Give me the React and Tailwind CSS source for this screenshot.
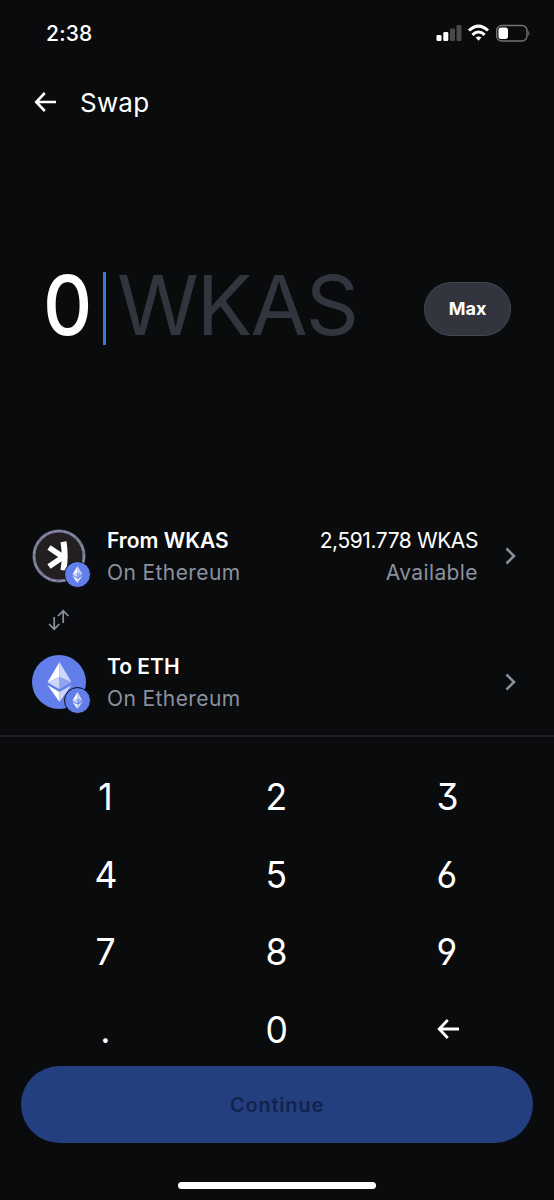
const KEYS = ['1', '2', '3', '4', '5', '6', '7', '8', '9', '.', '0', 'back']

function BackArrow({ size = 24, strokeWidth = 2.6 }) {
  return (
    <svg width={size} height={size} viewBox="0 0 24 24" fill="none" stroke="currentColor" strokeWidth={strokeWidth}>
      <path d="M11.8 3 L3.2 12 L11.8 21 M3.2 12 H23" />
    </svg>
  )
}

function EthDiamond({ className }) {
  return (
    <svg className={className} viewBox="0 0 24 40">
      <path d="M12 0 L0 20.3 L12 15z" fill="#fff" />
      <path d="M12 0 L24 20.3 L12 15z" fill="#ced7fa" />
      <path d="M12 15 L0 20.3 L12 27.3z" fill="#ced7fa" />
      <path d="M12 15 L24 20.3 L12 27.3z" fill="#91a5f3" />
      <path d="M0 23 L12 30 V40z" fill="#fff" />
      <path d="M24 23 L12 30 V40z" fill="#ced7fa" />
    </svg>
  )
}

function NetworkBadge() {
  return (
    <div className="absolute top-[32px] left-[32px] flex size-[27px] items-center justify-center rounded-full border-[1.5px] border-[#0a0b0d] bg-[#627eea]">
      <EthDiamond className="h-[17px] w-[11px]" />
    </div>
  )
}

function KaspaLogo() {
  return (
    <svg className="size-[54px]" viewBox="0 0 54 54" fill="none">
      <circle cx="27" cy="27" r="25" fill="#231f20" stroke="#70738f" strokeWidth="3" />
      <circle cx="27" cy="27" r="25" stroke="#9a9cb2" strokeWidth="1" strokeDasharray="7 3 4 2" />
      <path d="M31.5 12.8 Q33.8 27 31.5 41.4" stroke="#fff" strokeWidth="6" />
      <path d="M17 18.5 L31 28 L17 37.5" stroke="#fff" strokeWidth="5.6" />
    </svg>
  )
}

function EthLogo() {
  return (
    <div className="flex size-[54px] items-center justify-center rounded-full bg-[#627eea]">
      <EthDiamond className="h-10 w-[25px]" />
    </div>
  )
}

function AssetRow({ logo, title, network, balance }) {
  return (
    <div className="flex h-16 items-center pr-[37px] pl-8">
      <div className="relative">
        {logo}
        <NetworkBadge />
      </div>
      <div className="ml-[21px] flex-1 pt-0.5 text-[21px] leading-8">
        <p className="font-semibold text-white">{title}</p>
        <p className="tracking-[0.4px] text-[#8a919e]">{network}</p>
      </div>
      {balance && (
        <div className="mr-[26px] pt-0.5 text-right text-[21px] leading-8">
          <p className="tracking-[-0.42px] text-white">{balance}</p>
          <p className="tracking-[0.4px] text-[#8a919e]">Available</p>
        </div>
      )}
      <svg className="h-[18px] w-[13px] text-[#8a919e]" viewBox="0 0 13 18" fill="none" stroke="currentColor" strokeWidth="2.6">
        <path d="M2.5 1.5 L10 9 L2.5 16.5" />
      </svg>
    </div>
  )
}

function StatusBar() {
  return (
    <div className="flex h-[66px] items-center justify-between pr-[24px] pl-[46px]">
      <span className="pt-0.5 text-[21px] font-medium tracking-[0.2px]">2:38</span>
      <svg className="h-[18px] w-[94px]" viewBox="0 0 94 18">
        <rect x="0.5" y="11" width="5" height="6" rx="1.3" fill="#fff" />
        <rect x="7.3" y="8" width="5" height="9" rx="1.3" fill="#fff" />
        <rect x="14" y="4.5" width="5" height="12.5" rx="1.3" fill="#48494b" />
        <rect x="20.5" y="1" width="5" height="16" rx="1.3" fill="#48494b" />
        <g fill="none" stroke="#fff" strokeWidth="3">
          <path d="M33 6.5 Q42.5 -2.3 52 6.5" />
          <path d="M36.4 10.8 Q42.5 5.3 48.6 10.8" />
        </g>
        <path d="M39.6 13.6 Q42.5 11.2 45.4 13.6 L42.5 16.8z" fill="#fff" />
        <rect x="60.7" y="1.5" width="30.3" height="15.5" rx="5" fill="none" stroke="#737476" strokeWidth="1.4" />
        <rect x="62.5" y="3.6" width="9.5" height="11.3" rx="2.6" fill="#fff" />
        <path d="M92.4 6.5 Q94.5 9.2 92.4 12z" fill="#737476" />
      </svg>
    </div>
  )
}

export default function App() {
  return (
    <div className="flex h-[1200px] w-[554px] flex-col bg-[#0a0b0d] font-['Inter','Liberation_Sans',sans-serif] text-white">
      <StatusBar />

      <header className="flex h-[72px] items-center gap-[23px] pl-[33px]">
        <BackArrow />
        <h1 className="text-[26px] tracking-[0.2px]">Swap</h1>
      </header>

      <section className="flex h-[342px] items-center pr-[43px] pb-px pl-[41px]">
        <div className="flex items-center text-[83px] leading-none">
          <span className="w-[50px] origin-center scale-x-92 pb-1.5 text-center font-medium">0</span>
          <span className="ml-[12px] h-[73px] w-[3px] bg-[#3f76e5]" />
          <span className="ml-[11px] pb-1.5 tracking-[-2px] text-[#32353d]">WKAS</span>
        </div>
        <button className="ml-auto h-[54px] w-[87px] rounded-full border border-[#464852] bg-[#32353d] text-[18px] font-bold">
          Max
        </button>
      </section>

      <section className="flex h-[257px] flex-col border-b-2 border-[#1e2023] pt-11">
        <AssetRow logo={<KaspaLogo />} title="From WKAS" network="On Ethereum" balance="2,591.778 WKAS" />
        <div className="flex h-[62px] items-center pt-0.5 pl-[48px]">
          <svg className="h-[22px] w-[22px] text-[#8a919e]" viewBox="0 0 22 22" fill="none" stroke="currentColor" strokeWidth="1.7">
            <path d="M6.2 8 V20 M1 15 L6.2 20.2 L11.4 15" />
            <path d="M15.2 14 V2 M10 7 L15.2 1.8 L20.4 7" />
          </svg>
        </div>
        <AssetRow logo={<EthLogo />} title="To ETH" network="On Ethereum" />
      </section>

      <div className="grid h-[329px] shrink-0 grid-cols-3 px-[21px] pt-[21px] text-[37px] [font-feature-settings:'cv03','cv04','cv09']">
        {KEYS.map((key) => (
          <button key={key} className="flex h-[77.5px] items-center justify-center">
            {key === 'back' ? (
              <BackArrow strokeWidth={2.8} />
            ) : (
              <span className="-ml-px scale-x-96">{key}</span>
            )}
          </button>
        ))}
      </div>

      <div className="px-[21px]">
        <button className="h-[77px] w-full rounded-full bg-[#233f80] text-[20px] font-semibold tracking-[0.8px] text-[#12234d]">
          Continue
        </button>
      </div>

      <div className="mx-auto mt-[39px] h-[7px] w-[198px] rounded-full bg-white" />
    </div>
  )
}
